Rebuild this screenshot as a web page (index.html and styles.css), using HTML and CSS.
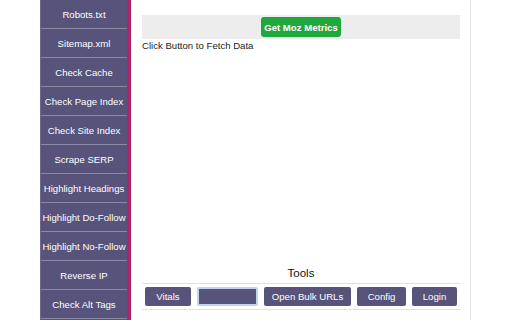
FILE: index.html
```
<html lang="en">
<head>
    <meta charset="UTF-8">
    <meta name="viewport" content="width=device-width, initial-scale=1.0">
    <title>SEO Tools</title>
    <link rel="stylesheet" href="styles.css">
</head>
<body>
<div class="page">
    <div class="gutter"></div>

    <div class="sidebar">
        <button class="side-button">Robots.txt</button>
        <button class="side-button">Sitemap.xml</button>
        <button class="side-button">Check Cache</button>
        <button class="side-button">Check Page Index</button>
        <button class="side-button">Check Site Index</button>
        <button class="side-button">Scrape SERP</button>
        <button class="side-button">Highlight Headings</button>
        <button class="side-button">Highlight Do-Follow</button>
        <button class="side-button">Highlight No-Follow</button>
        <button class="side-button">Reverse IP</button>
        <button class="side-button">Check Alt Tags</button>
    </div>

    <div class="main">
        <div class="moz-bar">
            <button class="moz-button">Get Moz Metrics</button>
        </div>
        <div class="status">Click Button to Fetch Data</div>

        <div class="tools">
            <div class="tools-title">Tools</div>
            <div class="tools-row">
                <button class="tool-button vitals">Vitals</button>
                <input type="text" class="tool-input">
                <button class="tool-button bulk">Open Bulk URLs</button>
                <button class="tool-button config">Config</button>
                <button class="tool-button login">Login</button>
            </div>
        </div>
    </div>
</div>
</body>
</html>
```

FILE: styles.css
```
body {
    font-family: "Liberation Sans", Arial, sans-serif;
    margin: 0;
    padding: 0;
    background-color: #fff;
    color: #222;
}

.page {
    display: flex;
    height: 320px;
    overflow: hidden;
}

.gutter {
    width: 40px;
    flex-shrink: 0;
}

.sidebar {
    width: 86px;
    flex-shrink: 0;
    display: flex;
    flex-direction: column;
    background-color: #57537a;
    border-left: 1px solid #6c6890;
    border-right: 4px solid #b0246a;
}

.side-button {
    height: 29px;
    flex-shrink: 0;
    background-color: #57537a;
    color: #fff;
    border: none;
    border-bottom: 1px solid #8c89a6;
    font-family: "Liberation Sans", Arial, sans-serif;
    font-size: 9.6px;
    white-space: nowrap;
    padding: 0;
    text-align: center;
}

.main {
    width: 318px;
    flex-shrink: 0;
    padding: 15px 10px 0 11px;
    border-right: 1px solid #e6e6e6;
    display: flex;
    flex-direction: column;
}

.moz-bar {
    background-color: #ededed;
    height: 24px;
    display: flex;
    justify-content: center;
    align-items: center;
}

.moz-button {
    background-color: #1fa83c;
    color: #fff;
    border: none;
    border-radius: 3px;
    height: 20px;
    width: 80px;
    padding: 0;
    font-family: "Liberation Sans", Arial, sans-serif;
    font-size: 9.6px;
    font-weight: bold;
    white-space: nowrap;
}

.status {
    font-size: 9.6px;
    margin-top: 1px;
    color: #222;
}

.tools {
    margin-top: auto;
    margin-bottom: 10px;
}

.tools-title {
    text-align: center;
    font-size: 11.5px;
    color: #111;
    margin-bottom: 4px;
}

.tools-row {
    display: flex;
    justify-content: center;
    gap: 6px;
    padding: 3px 0 3px 0;
    border-top: 1px solid #e0e0e0;
    border-bottom: 1px solid #e0e0e0;
}

.tool-button {
    background-color: #57537a;
    color: #fff;
    border: none;
    border-radius: 2px;
    height: 19px;
    padding: 0;
    font-family: "Liberation Sans", Arial, sans-serif;
    font-size: 9.6px;
    white-space: nowrap;
}

.vitals {
    width: 46px;
}

.bulk {
    width: 87px;
}

.config {
    width: 49px;
}

.login {
    width: 45px;
}

.tool-input {
    width: 61px;
    height: 19px;
    box-sizing: border-box;
    background-color: #57537a;
    border: 2px solid #c3d2f0;
    border-radius: 2px;
    padding: 0;
}
```
